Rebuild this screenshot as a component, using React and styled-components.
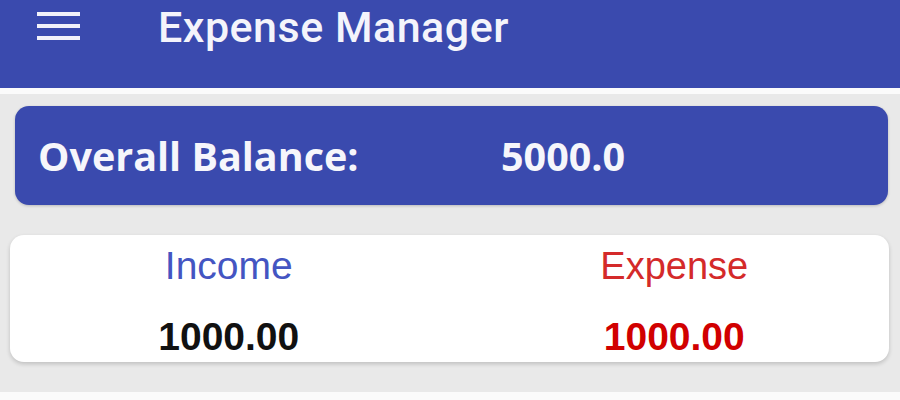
import React from "react";
import styled, { createGlobalStyle } from "styled-components";

const Global = createGlobalStyle`
  html, body { margin: 0; padding: 0; background: #fbfbfb; }
  #root { width: 900px; height: 400px; overflow: hidden; }
`;

const Page = styled.div`
  display: flex;
  flex-direction: column;
  width: 900px;
  height: 400px;
`;

const AppBar = styled.header`
  height: 88px;
  background: #3a4aae;
  display: flex;
  align-items: flex-start;
  box-sizing: border-box;
`;

const Toolbar = styled.div`
  height: 54px;
  display: flex;
  align-items: center;
  padding-left: 37px;
  gap: 78px;
`;

const MenuButton = styled.div`
  width: 43px;
  display: flex;
  flex-direction: column;
  gap: 8px;
  margin-top: -2px;
`;

const MenuLine = styled.span`
  display: block;
  height: 4px;
  background: #f2f2fa;
`;

const Title = styled.h1`
  margin: 0;
  font-family: Roboto, "Liberation Sans", sans-serif;
  font-weight: 500;
  font-size: 43px;
  letter-spacing: 0.5px;
  color: #f4f4fb;
`;

const Content = styled.main`
  margin-top: 6px;
  height: 298px;
  background: #e9e9e9;
  display: flex;
  flex-direction: column;
  padding-top: 12px;
  gap: 30px;
  box-sizing: border-box;
`;

const BalanceCard = styled.section`
  margin: 0 12px 0 15px;
  height: 99px;
  border-radius: 14px;
  background: #3a4aae;
  display: flex;
  align-items: center;
  padding-left: 23px;
  box-shadow: 0 1px 3px rgba(0, 0, 0, 0.2);
`;

const BalanceText = styled.span`
  font-family: "Open Sans", "Noto Sans", sans-serif;
  font-weight: 700;
  font-size: 39.5px;
  color: #f6f6fb;
  width: ${(p) => p.$width || "auto"};
`;

const SummaryCard = styled.section`
  margin: 0 11px 0 10px;
  height: 127px;
  border-radius: 14px;
  background: #ffffff;
  display: grid;
  grid-template-columns: 1fr 1fr;
  box-shadow: 0 2px 4px rgba(0, 0, 0, 0.18);
`;

const Column = styled.div`
  display: flex;
  flex-direction: column;
  align-items: center;
  padding-top: 6px;
  gap: 21px;
  padding-left: ${(p) => p.$shiftLeft || "0px"};
  padding-right: ${(p) => p.$shiftRight || "0px"};
`;

const Label = styled.span`
  font-family: "Liberation Sans", Arial, sans-serif;
  font-size: ${(p) => p.$size};
  line-height: 50px;
  color: ${(p) => p.$color};
`;

const Amount = styled.span`
  font-family: "Liberation Sans", Arial, sans-serif;
  font-weight: 700;
  font-size: 39px;
  line-height: 50px;
  color: ${(p) => p.$color};
`;

export default function App() {
  return (
    <>
      <Global />
      <Page>
        <AppBar>
          <Toolbar>
            <MenuButton>
              <MenuLine />
              <MenuLine />
              <MenuLine />
            </MenuButton>
            <Title>Expense Manager</Title>
          </Toolbar>
        </AppBar>
        <Content>
          <BalanceCard>
            <BalanceText $width="463px">Overall Balance:</BalanceText>
            <BalanceText>5000.0</BalanceText>
          </BalanceCard>
          <SummaryCard>
            <Column $shiftRight="2px">
              <Label $size="39px" $color="#4455c2">Income</Label>
              <Amount $color="#111111">1000.00</Amount>
            </Column>
            <Column $shiftLeft="10px">
              <Label $size="38px" $color="#d42a2a">Expense</Label>
              <Amount $color="#d10000">1000.00</Amount>
            </Column>
          </SummaryCard>
        </Content>
      </Page>
    </>
  );
}
